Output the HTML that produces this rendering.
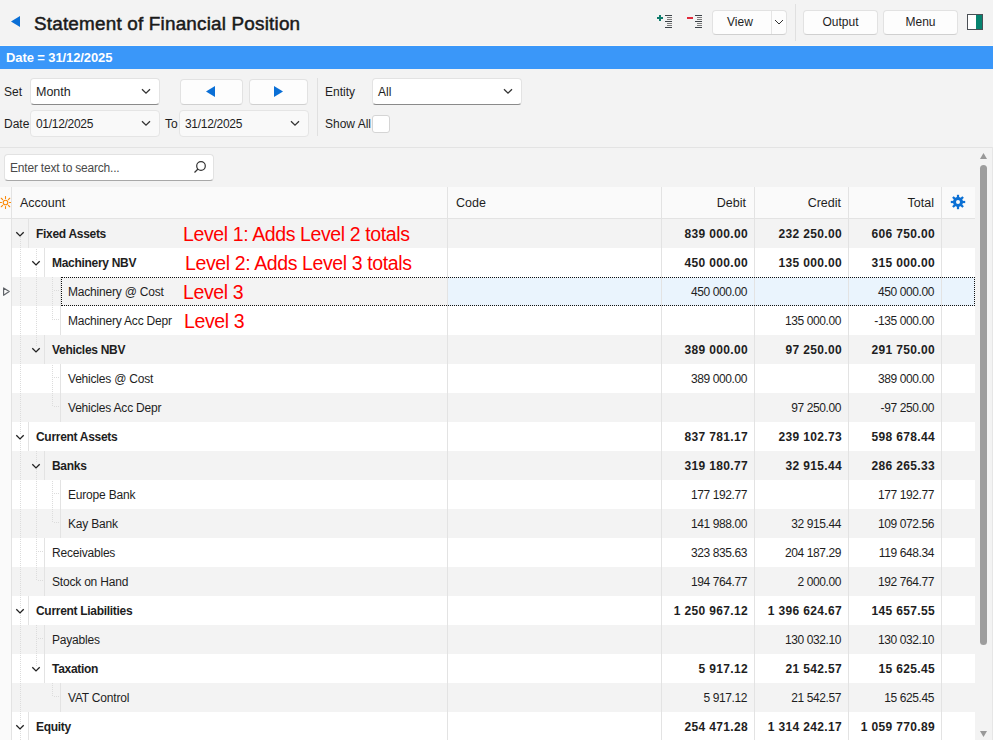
<!DOCTYPE html><html><head><meta charset="utf-8"><style>
*{box-sizing:border-box;margin:0;padding:0}
html,body{width:993px;height:740px;overflow:hidden;background:#f3f3f3;font-family:"Liberation Sans",sans-serif;color:#1e1e1e}
.a{position:absolute}
.t{position:absolute;white-space:pre;font-size:12px;padding-top:1px}
.btn{position:absolute;background:#fdfdfd;border:1px solid #e2e2e2;border-bottom-color:#d0d0d0;border-radius:4px}
.cmb{position:absolute;background:#fff;border:1px solid #e3e3e3;border-bottom:1px solid #8a8a8a;border-radius:4px}
.cmbd{position:absolute;background:#f9f9f9;border:1px solid #e5e5e5;border-radius:4px}
.row{position:absolute;left:12px;width:963px;height:29px}
.vl{position:absolute;width:1px;background:#e3e3e3}
.dv{position:absolute;width:1px;background-image:linear-gradient(#dcdcdc 50%,transparent 50%);background-size:1px 2px}
.dh{position:absolute;height:1px;background-image:linear-gradient(90deg,#dcdcdc 50%,transparent 50%);background-size:2px 1px}
.num{position:absolute;white-space:pre;font-size:12px;text-align:right;letter-spacing:-0.4px;padding-top:1px}
.numb{position:absolute;white-space:pre;font-size:12px;font-weight:bold;text-align:right;letter-spacing:0.35px;padding-top:1px}
.chev{position:absolute}
.ann{position:absolute;white-space:pre;font-size:19.5px;letter-spacing:-0.39px;color:#ff0000;padding-top:1px}
</style></head><body>
<svg class="a" style="left:11px;top:16px" width="9" height="11" viewBox="0 0 9 11"><path d="M9 0 L0 5.5 L9 11 Z" fill="#0a6fd6"/></svg>
<div class="t" style="left:34px;top:11px;font-size:18.9px;letter-spacing:0.19px;font-weight:normal;-webkit-text-stroke:0.5px #1a1a1a;line-height:24px;color:#1a1a1a">Statement of Financial Position</div>
<svg class="a" style="left:656px;top:14px" width="17" height="15" viewBox="0 0 17 15"><path d="M1 4h6M4 1v6" stroke="#0f7b6c" stroke-width="2"/><path d="M9 1.5h7M9 7.5h7M9 13.5h7" stroke="#3c4248" stroke-width="1"/><path d="M11 3.5h5M11 5.5h5M11 9.5h5M11 11.5h5" stroke="#7c7c7c" stroke-width="1"/></svg>
<svg class="a" style="left:686px;top:14px" width="17" height="15" viewBox="0 0 17 15"><path d="M1 4h6" stroke="#e0293a" stroke-width="2"/><path d="M9 1.5h7M9 7.5h7M9 13.5h7" stroke="#3c4248" stroke-width="1"/><path d="M11 3.5h5M11 5.5h5M11 9.5h5M11 11.5h5" stroke="#7c7c7c" stroke-width="1"/></svg>
<div class="btn" style="left:712px;top:10px;width:75px;height:25px"></div>
<div class="a" style="left:771px;top:11px;width:1px;height:23px;background:#e5e5e5"></div>
<div class="t" style="left:727px;top:10px;line-height:22px">View</div>
<svg class="a" style="left:774px;top:19px" width="10" height="6" viewBox="0 0 10 6"><path d="M1 1L5 5L9 1" fill="none" stroke="#333" stroke-width="1"/></svg>
<div class="a" style="left:795px;top:4px;width:1px;height:37px;background:#e0e0e0"></div>
<div class="btn" style="left:803px;top:10px;width:75px;height:25px"></div>
<div class="t" style="left:803px;top:10px;width:75px;text-align:center;line-height:22px">Output</div>
<div class="btn" style="left:883px;top:10px;width:75px;height:25px"></div>
<div class="t" style="left:883px;top:10px;width:75px;text-align:center;line-height:22px">Menu</div>
<div class="a" style="left:967px;top:14px;width:16px;height:16px;border:1.5px solid #4a4f55;background:linear-gradient(90deg,#fff 56%,#06836f 56%)"></div>
<div class="a" style="left:0;top:45px;width:993px;height:1px;background:#fbf8f2"></div><div class="a" style="left:0;top:46px;width:993px;height:23px;background:#3a97f9"></div>
<div class="t" style="left:6px;top:46px;line-height:22px;font-weight:bold;color:#fff;font-size:13px;letter-spacing:-0.1px">Date = 31/12/2025</div>
<div class="t" style="left:4px;top:79px;line-height:25px">Set</div>
<div class="cmb" style="left:30px;top:78px;width:130px;height:27px"></div>
<div class="t" style="left:36px;top:79px;line-height:25px;font-size:12.5px">Month</div>
<svg class="a" style="left:141px;top:88px" width="10" height="7" viewBox="0 0 10 7"><path d="M1 1.2L5 5.2L9 1.2" fill="none" stroke="#333" stroke-width="1.3"/></svg>
<div class="btn" style="left:180px;top:79px;width:63px;height:26px"></div>
<svg class="a" style="left:206px;top:86px" width="9" height="11" viewBox="0 0 9 11"><path d="M9 0 L0 5.5 L9 11 Z" fill="#0a6fd6"/></svg>
<div class="btn" style="left:249px;top:79px;width:59px;height:26px"></div>
<svg class="a" style="left:274px;top:86px" width="9" height="11" viewBox="0 0 9 11"><path d="M0 0 L9 5.5 L0 11 Z" fill="#0a6fd6"/></svg>
<div class="t" style="left:4px;top:111px;line-height:25px">Date</div>
<div class="cmbd" style="left:30px;top:110px;width:130px;height:27px"></div>
<div class="t" style="left:36px;top:111px;line-height:25px;letter-spacing:-0.3px">01/12/2025</div>
<svg class="a" style="left:141px;top:120px" width="10" height="7" viewBox="0 0 10 7"><path d="M1 1.2L5 5.2L9 1.2" fill="none" stroke="#333" stroke-width="1.3"/></svg>
<div class="t" style="left:165px;top:111px;line-height:25px">To</div>
<div class="cmbd" style="left:179px;top:110px;width:130px;height:27px"></div>
<div class="t" style="left:185px;top:111px;line-height:25px;letter-spacing:-0.3px">31/12/2025</div>
<svg class="a" style="left:290px;top:120px" width="10" height="7" viewBox="0 0 10 7"><path d="M1 1.2L5 5.2L9 1.2" fill="none" stroke="#333" stroke-width="1.3"/></svg>
<div class="a" style="left:317px;top:78px;width:1px;height:58px;background:#e0e0e0"></div>
<div class="t" style="left:325px;top:79px;line-height:25px">Entity</div>
<div class="cmb" style="left:372px;top:78px;width:150px;height:27px"></div>
<div class="t" style="left:378px;top:79px;line-height:25px">All</div>
<svg class="a" style="left:503px;top:88px" width="10" height="7" viewBox="0 0 10 7"><path d="M1 1.2L5 5.2L9 1.2" fill="none" stroke="#333" stroke-width="1.3"/></svg>
<div class="t" style="left:325px;top:111px;line-height:25px">Show All</div>
<div class="a" style="left:372px;top:115px;width:18px;height:18px;background:#fff;border:1px solid #d5d5d5;border-radius:3px"></div>
<div class="a" style="left:0;top:147px;width:992px;height:1px;background:#e3e3e3"></div><div class="a" style="left:992px;top:147px;width:1px;height:593px;background:#e6e6e6"></div>
<div class="btn" style="left:4px;top:154px;width:210px;height:27px;background:#fff;border-bottom-color:#a8a8a8"></div>
<div class="t" style="left:10px;top:154px;line-height:26px;color:#4a4a4a;letter-spacing:-0.2px">Enter text to search...</div>
<svg class="a" style="left:193px;top:160px" width="14" height="14" viewBox="0 0 14 14"><circle cx="8" cy="6" r="4.3" fill="none" stroke="#333" stroke-width="1.2"/><path d="M5 9L1.5 12.5" stroke="#333" stroke-width="1.3"/></svg>
<div class="a" style="left:0;top:187px;width:975px;height:31px;background:#fafafa"></div>
<div class="a" style="left:0;top:218px;width:975px;height:1px;background:#e3e3e3"></div>
<svg class="a" style="left:0px;top:196px" width="12" height="14" viewBox="0 0 12 14"><circle cx="5.5" cy="6.5" r="2.3" fill="none" stroke="#fb8a0a" stroke-width="1.1"/><path d="M9.50 6.50L11.50 6.50M8.33 9.33L9.74 10.74M5.50 10.50L5.50 12.50M2.67 9.33L1.26 10.74M1.50 6.50L-0.50 6.50M2.67 3.67L1.26 2.26M5.50 2.50L5.50 0.50M8.33 3.67L9.74 2.26" stroke="#fb8a0a" stroke-width="1.1" stroke-linecap="round"/></svg>
<div class="t" style="left:20px;top:187px;line-height:31px;font-size:12.5px">Account</div>
<div class="t" style="left:456px;top:187px;line-height:31px;font-size:12.5px">Code</div>
<div class="t" style="left:662px;top:187px;width:84px;text-align:right;line-height:31px;font-size:12.5px">Debit</div>
<div class="t" style="left:755px;top:187px;width:86px;text-align:right;line-height:31px;font-size:12.5px">Credit</div>
<div class="t" style="left:849px;top:187px;width:85px;text-align:right;line-height:31px;font-size:12.5px">Total</div>
<svg class="a" style="left:950px;top:194px" width="16" height="16" viewBox="0 0 16 16"><g fill="#0b70d4"><circle cx="8" cy="8" r="5"/><rect x="6.9" y="0.8" width="2.2" height="3.5" transform="rotate(0 8 8)"/><rect x="6.9" y="0.8" width="2.2" height="3.5" transform="rotate(45 8 8)"/><rect x="6.9" y="0.8" width="2.2" height="3.5" transform="rotate(90 8 8)"/><rect x="6.9" y="0.8" width="2.2" height="3.5" transform="rotate(135 8 8)"/><rect x="6.9" y="0.8" width="2.2" height="3.5" transform="rotate(180 8 8)"/><rect x="6.9" y="0.8" width="2.2" height="3.5" transform="rotate(225 8 8)"/><rect x="6.9" y="0.8" width="2.2" height="3.5" transform="rotate(270 8 8)"/><rect x="6.9" y="0.8" width="2.2" height="3.5" transform="rotate(315 8 8)"/></g><circle cx="8" cy="8" r="2" fill="#fafafa"/></svg>
<div class="a" style="left:12px;top:219px;width:963px;height:29px;background:#f3f3f3"></div>
<div class="a" style="left:0;top:219px;width:11px;height:29px;background:#fafafa"></div>
<div class="dv" style="left:20px;top:236px;height:12px;background-position:0 1px"></div>
<svg class="a" style="left:15px;top:231px" width="11" height="6" viewBox="0 0 11 6"><path d="M1.3 1.3L5 4.9L8.7 1.3" fill="none" stroke="#222" stroke-width="1.35"/></svg>
<div class="vl" style="left:28px;top:219px;height:29px"></div>
<div class="t" style="left:36px;top:219px;line-height:29px;font-weight:bold;letter-spacing:-0.3px">Fixed Assets</div>
<div class="ann" style="left:183px;top:219px;line-height:29px">Level 1: Adds Level 2 totals</div>
<div class="numb" style="left:662px;top:219px;width:86px;line-height:29px">839 000.00</div>
<div class="numb" style="left:755px;top:219px;width:87px;line-height:29px">232 250.00</div>
<div class="numb" style="left:849px;top:219px;width:86px;line-height:29px">606 750.00</div>
<div class="a" style="left:12px;top:248px;width:963px;height:29px;background:#ffffff"></div>
<div class="a" style="left:0;top:248px;width:11px;height:29px;background:#fafafa"></div>
<div class="dv" style="left:20px;top:248px;height:29px;background-position:0 1px"></div>
<div class="dv" style="left:36px;top:248px;height:12px;background-position:0 1px"></div>
<div class="dv" style="left:36px;top:265px;height:12px;background-position:0 0px"></div>
<svg class="a" style="left:31px;top:260px" width="11" height="6" viewBox="0 0 11 6"><path d="M1.3 1.3L5 4.9L8.7 1.3" fill="none" stroke="#222" stroke-width="1.35"/></svg>
<div class="vl" style="left:44px;top:248px;height:29px"></div>
<div class="t" style="left:52px;top:248px;line-height:29px;font-weight:bold;letter-spacing:-0.3px">Machinery NBV</div>
<div class="ann" style="left:185px;top:248px;line-height:29px">Level 2: Adds Level 3 totals</div>
<div class="numb" style="left:662px;top:248px;width:86px;line-height:29px">450 000.00</div>
<div class="numb" style="left:755px;top:248px;width:87px;line-height:29px">135 000.00</div>
<div class="numb" style="left:849px;top:248px;width:86px;line-height:29px">315 000.00</div>
<div class="a" style="left:12px;top:277px;width:963px;height:29px;background:#f3f3f3"></div>
<div class="a" style="left:448px;top:277px;width:527px;height:29px;background:#eaf4fd"></div>
<div class="a" style="left:0;top:277px;width:11px;height:29px;background:#fafafa"></div>
<div class="dv" style="left:20px;top:277px;height:29px;background-position:0 0px"></div>
<div class="dv" style="left:36px;top:277px;height:29px;background-position:0 0px"></div>
<div class="dv" style="left:52px;top:277px;height:29px;background-position:0 0px"></div>
<div class="dh" style="left:54px;top:290px;width:7px"></div>
<div class="vl" style="left:60px;top:277px;height:29px"></div>
<div class="t" style="left:68px;top:277px;line-height:29px;font-weight:normal;letter-spacing:-0.2px">Machinery &#64; Cost</div>
<div class="ann" style="left:183px;top:277px;line-height:29px">Level 3</div>
<div class="num" style="left:662px;top:277px;width:85px;line-height:29px">450 000.00</div>
<div class="num" style="left:849px;top:277px;width:85px;line-height:29px">450 000.00</div>
<div class="a" style="left:12px;top:306px;width:963px;height:29px;background:#ffffff"></div>
<div class="a" style="left:0;top:306px;width:11px;height:29px;background:#fafafa"></div>
<div class="dv" style="left:20px;top:306px;height:29px;background-position:0 1px"></div>
<div class="dv" style="left:36px;top:306px;height:29px;background-position:0 1px"></div>
<div class="dv" style="left:52px;top:306px;height:14px;background-position:0 1px"></div>
<div class="dh" style="left:54px;top:319px;width:7px"></div>
<div class="vl" style="left:60px;top:306px;height:29px"></div>
<div class="t" style="left:68px;top:306px;line-height:29px;font-weight:normal;letter-spacing:-0.2px">Machinery Acc Depr</div>
<div class="ann" style="left:184px;top:306px;line-height:29px">Level 3</div>
<div class="num" style="left:755px;top:306px;width:86px;line-height:29px">135 000.00</div>
<div class="num" style="left:849px;top:306px;width:85px;line-height:29px">-135 000.00</div>
<div class="a" style="left:12px;top:335px;width:963px;height:29px;background:#f3f3f3"></div>
<div class="a" style="left:0;top:335px;width:11px;height:29px;background:#fafafa"></div>
<div class="dv" style="left:20px;top:335px;height:29px;background-position:0 0px"></div>
<div class="dv" style="left:36px;top:335px;height:12px;background-position:0 0px"></div>
<svg class="a" style="left:31px;top:347px" width="11" height="6" viewBox="0 0 11 6"><path d="M1.3 1.3L5 4.9L8.7 1.3" fill="none" stroke="#222" stroke-width="1.35"/></svg>
<div class="vl" style="left:44px;top:335px;height:29px"></div>
<div class="t" style="left:52px;top:335px;line-height:29px;font-weight:bold;letter-spacing:-0.3px">Vehicles NBV</div>
<div class="numb" style="left:662px;top:335px;width:86px;line-height:29px">389 000.00</div>
<div class="numb" style="left:755px;top:335px;width:87px;line-height:29px">97 250.00</div>
<div class="numb" style="left:849px;top:335px;width:86px;line-height:29px">291 750.00</div>
<div class="a" style="left:12px;top:364px;width:963px;height:29px;background:#ffffff"></div>
<div class="a" style="left:0;top:364px;width:11px;height:29px;background:#fafafa"></div>
<div class="dv" style="left:20px;top:364px;height:29px;background-position:0 1px"></div>
<div class="dv" style="left:52px;top:364px;height:29px;background-position:0 1px"></div>
<div class="dh" style="left:54px;top:377px;width:7px"></div>
<div class="vl" style="left:60px;top:364px;height:29px"></div>
<div class="t" style="left:68px;top:364px;line-height:29px;font-weight:normal;letter-spacing:-0.2px">Vehicles &#64; Cost</div>
<div class="num" style="left:662px;top:364px;width:85px;line-height:29px">389 000.00</div>
<div class="num" style="left:849px;top:364px;width:85px;line-height:29px">389 000.00</div>
<div class="a" style="left:12px;top:393px;width:963px;height:29px;background:#f3f3f3"></div>
<div class="a" style="left:0;top:393px;width:11px;height:29px;background:#fafafa"></div>
<div class="dv" style="left:20px;top:393px;height:29px;background-position:0 0px"></div>
<div class="dv" style="left:52px;top:393px;height:14px;background-position:0 0px"></div>
<div class="dh" style="left:54px;top:406px;width:7px"></div>
<div class="vl" style="left:60px;top:393px;height:29px"></div>
<div class="t" style="left:68px;top:393px;line-height:29px;font-weight:normal;letter-spacing:-0.2px">Vehicles Acc Depr</div>
<div class="num" style="left:755px;top:393px;width:86px;line-height:29px">97 250.00</div>
<div class="num" style="left:849px;top:393px;width:85px;line-height:29px">-97 250.00</div>
<div class="a" style="left:12px;top:422px;width:963px;height:29px;background:#ffffff"></div>
<div class="a" style="left:0;top:422px;width:11px;height:29px;background:#fafafa"></div>
<div class="dv" style="left:20px;top:422px;height:12px;background-position:0 1px"></div>
<div class="dv" style="left:20px;top:439px;height:12px;background-position:0 0px"></div>
<svg class="a" style="left:15px;top:434px" width="11" height="6" viewBox="0 0 11 6"><path d="M1.3 1.3L5 4.9L8.7 1.3" fill="none" stroke="#222" stroke-width="1.35"/></svg>
<div class="vl" style="left:28px;top:422px;height:29px"></div>
<div class="t" style="left:36px;top:422px;line-height:29px;font-weight:bold;letter-spacing:-0.3px">Current Assets</div>
<div class="numb" style="left:662px;top:422px;width:86px;line-height:29px">837 781.17</div>
<div class="numb" style="left:755px;top:422px;width:87px;line-height:29px">239 102.73</div>
<div class="numb" style="left:849px;top:422px;width:86px;line-height:29px">598 678.44</div>
<div class="a" style="left:12px;top:451px;width:963px;height:29px;background:#f3f3f3"></div>
<div class="a" style="left:0;top:451px;width:11px;height:29px;background:#fafafa"></div>
<div class="dv" style="left:20px;top:451px;height:29px;background-position:0 0px"></div>
<div class="dv" style="left:36px;top:451px;height:12px;background-position:0 0px"></div>
<div class="dv" style="left:36px;top:468px;height:12px;background-position:0 1px"></div>
<svg class="a" style="left:31px;top:463px" width="11" height="6" viewBox="0 0 11 6"><path d="M1.3 1.3L5 4.9L8.7 1.3" fill="none" stroke="#222" stroke-width="1.35"/></svg>
<div class="vl" style="left:44px;top:451px;height:29px"></div>
<div class="t" style="left:52px;top:451px;line-height:29px;font-weight:bold;letter-spacing:-0.3px">Banks</div>
<div class="numb" style="left:662px;top:451px;width:86px;line-height:29px">319 180.77</div>
<div class="numb" style="left:755px;top:451px;width:87px;line-height:29px">32 915.44</div>
<div class="numb" style="left:849px;top:451px;width:86px;line-height:29px">286 265.33</div>
<div class="a" style="left:12px;top:480px;width:963px;height:29px;background:#ffffff"></div>
<div class="a" style="left:0;top:480px;width:11px;height:29px;background:#fafafa"></div>
<div class="dv" style="left:20px;top:480px;height:29px;background-position:0 1px"></div>
<div class="dv" style="left:36px;top:480px;height:29px;background-position:0 1px"></div>
<div class="dv" style="left:52px;top:480px;height:29px;background-position:0 1px"></div>
<div class="dh" style="left:54px;top:493px;width:7px"></div>
<div class="vl" style="left:60px;top:480px;height:29px"></div>
<div class="t" style="left:68px;top:480px;line-height:29px;font-weight:normal;letter-spacing:-0.2px">Europe Bank</div>
<div class="num" style="left:662px;top:480px;width:85px;line-height:29px">177 192.77</div>
<div class="num" style="left:849px;top:480px;width:85px;line-height:29px">177 192.77</div>
<div class="a" style="left:12px;top:509px;width:963px;height:29px;background:#f3f3f3"></div>
<div class="a" style="left:0;top:509px;width:11px;height:29px;background:#fafafa"></div>
<div class="dv" style="left:20px;top:509px;height:29px;background-position:0 0px"></div>
<div class="dv" style="left:36px;top:509px;height:29px;background-position:0 0px"></div>
<div class="dv" style="left:52px;top:509px;height:14px;background-position:0 0px"></div>
<div class="dh" style="left:54px;top:522px;width:7px"></div>
<div class="vl" style="left:60px;top:509px;height:29px"></div>
<div class="t" style="left:68px;top:509px;line-height:29px;font-weight:normal;letter-spacing:-0.2px">Kay Bank</div>
<div class="num" style="left:662px;top:509px;width:85px;line-height:29px">141 988.00</div>
<div class="num" style="left:755px;top:509px;width:86px;line-height:29px">32 915.44</div>
<div class="num" style="left:849px;top:509px;width:85px;line-height:29px">109 072.56</div>
<div class="a" style="left:12px;top:538px;width:963px;height:29px;background:#ffffff"></div>
<div class="a" style="left:0;top:538px;width:11px;height:29px;background:#fafafa"></div>
<div class="dv" style="left:20px;top:538px;height:29px;background-position:0 1px"></div>
<div class="dv" style="left:36px;top:538px;height:29px;background-position:0 1px"></div>
<div class="dh" style="left:38px;top:551px;width:7px"></div>
<div class="vl" style="left:44px;top:538px;height:29px"></div>
<div class="t" style="left:52px;top:538px;line-height:29px;font-weight:normal;letter-spacing:-0.2px">Receivables</div>
<div class="num" style="left:662px;top:538px;width:85px;line-height:29px">323 835.63</div>
<div class="num" style="left:755px;top:538px;width:86px;line-height:29px">204 187.29</div>
<div class="num" style="left:849px;top:538px;width:85px;line-height:29px">119 648.34</div>
<div class="a" style="left:12px;top:567px;width:963px;height:29px;background:#f3f3f3"></div>
<div class="a" style="left:0;top:567px;width:11px;height:29px;background:#fafafa"></div>
<div class="dv" style="left:20px;top:567px;height:29px;background-position:0 0px"></div>
<div class="dv" style="left:36px;top:567px;height:14px;background-position:0 0px"></div>
<div class="dh" style="left:38px;top:580px;width:7px"></div>
<div class="vl" style="left:44px;top:567px;height:29px"></div>
<div class="t" style="left:52px;top:567px;line-height:29px;font-weight:normal;letter-spacing:-0.2px">Stock on Hand</div>
<div class="num" style="left:662px;top:567px;width:85px;line-height:29px">194 764.77</div>
<div class="num" style="left:755px;top:567px;width:86px;line-height:29px">2 000.00</div>
<div class="num" style="left:849px;top:567px;width:85px;line-height:29px">192 764.77</div>
<div class="a" style="left:12px;top:596px;width:963px;height:29px;background:#ffffff"></div>
<div class="a" style="left:0;top:596px;width:11px;height:29px;background:#fafafa"></div>
<div class="dv" style="left:20px;top:596px;height:12px;background-position:0 1px"></div>
<div class="dv" style="left:20px;top:613px;height:12px;background-position:0 0px"></div>
<svg class="a" style="left:15px;top:608px" width="11" height="6" viewBox="0 0 11 6"><path d="M1.3 1.3L5 4.9L8.7 1.3" fill="none" stroke="#222" stroke-width="1.35"/></svg>
<div class="vl" style="left:28px;top:596px;height:29px"></div>
<div class="t" style="left:36px;top:596px;line-height:29px;font-weight:bold;letter-spacing:-0.3px">Current Liabilities</div>
<div class="numb" style="left:662px;top:596px;width:86px;line-height:29px">1 250 967.12</div>
<div class="numb" style="left:755px;top:596px;width:87px;line-height:29px">1 396 624.67</div>
<div class="numb" style="left:849px;top:596px;width:86px;line-height:29px">145 657.55</div>
<div class="a" style="left:12px;top:625px;width:963px;height:29px;background:#f3f3f3"></div>
<div class="a" style="left:0;top:625px;width:11px;height:29px;background:#fafafa"></div>
<div class="dv" style="left:20px;top:625px;height:29px;background-position:0 0px"></div>
<div class="dv" style="left:36px;top:625px;height:29px;background-position:0 0px"></div>
<div class="dh" style="left:38px;top:638px;width:7px"></div>
<div class="vl" style="left:44px;top:625px;height:29px"></div>
<div class="t" style="left:52px;top:625px;line-height:29px;font-weight:normal;letter-spacing:-0.2px">Payables</div>
<div class="num" style="left:755px;top:625px;width:86px;line-height:29px">130 032.10</div>
<div class="num" style="left:849px;top:625px;width:85px;line-height:29px">130 032.10</div>
<div class="a" style="left:12px;top:654px;width:963px;height:29px;background:#ffffff"></div>
<div class="a" style="left:0;top:654px;width:11px;height:29px;background:#fafafa"></div>
<div class="dv" style="left:20px;top:654px;height:29px;background-position:0 1px"></div>
<div class="dv" style="left:36px;top:654px;height:12px;background-position:0 1px"></div>
<svg class="a" style="left:31px;top:666px" width="11" height="6" viewBox="0 0 11 6"><path d="M1.3 1.3L5 4.9L8.7 1.3" fill="none" stroke="#222" stroke-width="1.35"/></svg>
<div class="vl" style="left:44px;top:654px;height:29px"></div>
<div class="t" style="left:52px;top:654px;line-height:29px;font-weight:bold;letter-spacing:-0.3px">Taxation</div>
<div class="numb" style="left:662px;top:654px;width:86px;line-height:29px">5 917.12</div>
<div class="numb" style="left:755px;top:654px;width:87px;line-height:29px">21 542.57</div>
<div class="numb" style="left:849px;top:654px;width:86px;line-height:29px">15 625.45</div>
<div class="a" style="left:12px;top:683px;width:963px;height:29px;background:#f3f3f3"></div>
<div class="a" style="left:0;top:683px;width:11px;height:29px;background:#fafafa"></div>
<div class="dv" style="left:20px;top:683px;height:29px;background-position:0 0px"></div>
<div class="dv" style="left:52px;top:683px;height:14px;background-position:0 0px"></div>
<div class="dh" style="left:54px;top:696px;width:7px"></div>
<div class="vl" style="left:60px;top:683px;height:29px"></div>
<div class="t" style="left:68px;top:683px;line-height:29px;font-weight:normal;letter-spacing:-0.2px">VAT Control</div>
<div class="num" style="left:662px;top:683px;width:85px;line-height:29px">5 917.12</div>
<div class="num" style="left:755px;top:683px;width:86px;line-height:29px">21 542.57</div>
<div class="num" style="left:849px;top:683px;width:85px;line-height:29px">15 625.45</div>
<div class="a" style="left:12px;top:712px;width:963px;height:29px;background:#ffffff"></div>
<div class="a" style="left:0;top:712px;width:11px;height:29px;background:#fafafa"></div>
<div class="dv" style="left:20px;top:712px;height:12px;background-position:0 1px"></div>
<div class="dv" style="left:20px;top:729px;height:12px;background-position:0 0px"></div>
<svg class="a" style="left:15px;top:724px" width="11" height="6" viewBox="0 0 11 6"><path d="M1.3 1.3L5 4.9L8.7 1.3" fill="none" stroke="#222" stroke-width="1.35"/></svg>
<div class="vl" style="left:28px;top:712px;height:29px"></div>
<div class="t" style="left:36px;top:712px;line-height:29px;font-weight:bold;letter-spacing:-0.3px">Equity</div>
<div class="numb" style="left:662px;top:712px;width:86px;line-height:29px">254 471.28</div>
<div class="numb" style="left:755px;top:712px;width:87px;line-height:29px">1 314 242.17</div>
<div class="numb" style="left:849px;top:712px;width:86px;line-height:29px">1 059 770.89</div>
<div class="vl" style="left:11px;top:187px;height:553px"></div>
<div class="vl" style="left:447px;top:187px;height:553px"></div>
<div class="vl" style="left:661px;top:187px;height:553px"></div>
<div class="vl" style="left:754px;top:187px;height:553px"></div>
<div class="vl" style="left:848px;top:187px;height:553px"></div>
<div class="vl" style="left:941px;top:187px;height:553px"></div>
<div class="a" style="left:61px;top:277px;width:914px;height:29px;border:1px dotted #111"></div>
<svg class="a" style="left:2px;top:287px" width="9" height="11" viewBox="0 0 9 11"><path d="M1.6 0.9L7.2 4.6L1.6 8.3Z" fill="none" stroke="#5f6368" stroke-width="1.15" stroke-linejoin="round"/></svg>
<svg class="a" style="left:980px;top:153px" width="7" height="6" viewBox="0 0 7 6"><path d="M3.5 0L7 6H0Z" fill="#999"/></svg>
<div class="a" style="left:980px;top:165px;width:7px;height:480px;border-radius:3.5px;background:#9d9d9d"></div>
<svg class="a" style="left:980px;top:731px" width="7" height="6" viewBox="0 0 7 6"><path d="M0 0H7L3.5 6Z" fill="#999"/></svg>
</body></html>
